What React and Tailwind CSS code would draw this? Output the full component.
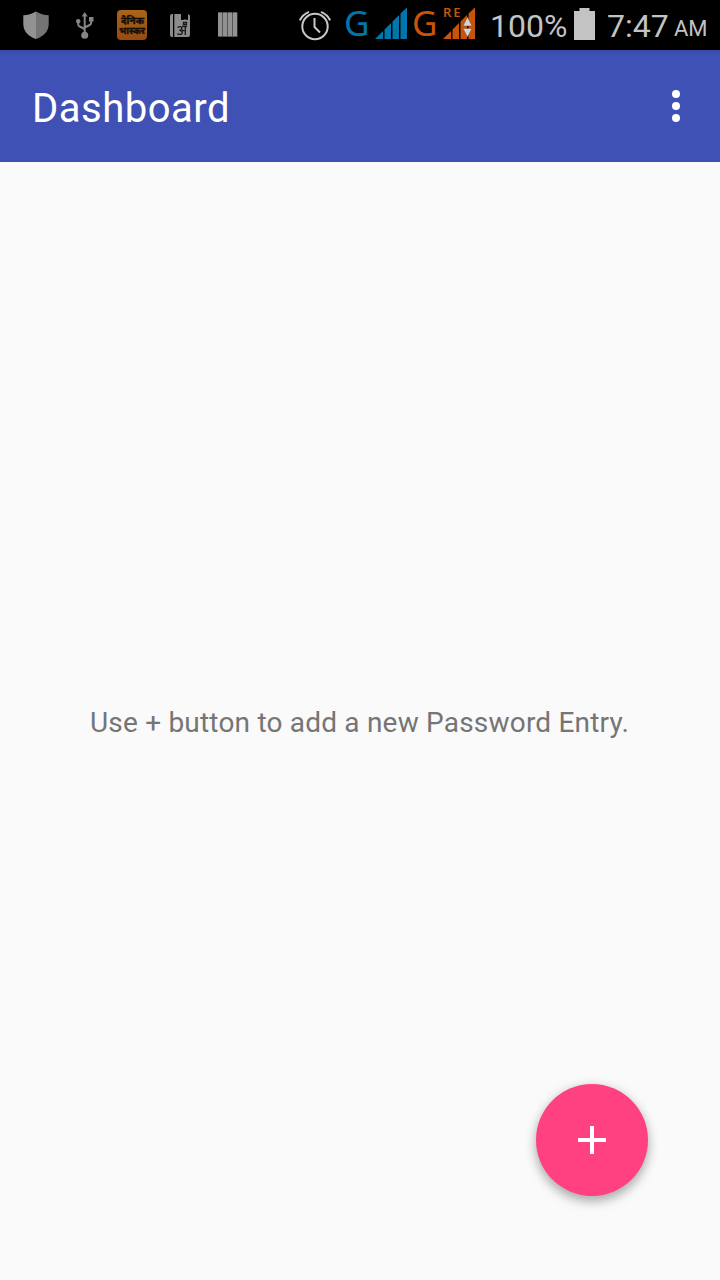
function ShieldIcon() {
  return (
    <svg className="ml-[23px] h-[50px] w-[26px] shrink-0" viewBox="0 0 26 50">
      <path d="M13 11.5C9 14 5 15 .3 15.300V24c0 7 5 12.500 12.700 15Z" fill="#929292" />
      <path d="M13 11.500c4 2.500 8 3.500 12.700 3.800V24c0 7-5 12.500-12.700 15Z" fill="#747474" />
    </svg>
  );
}

function UsbIcon() {
  return (
    <svg className="ml-[26px] h-[50px] w-[20px] shrink-0" viewBox="0 0 20 50">
      <g fill="#858585">
        <path d="M9.700 12l3 4.500H6.700z" />
        <circle cx="9.700" cy="35.200" r="3.500" />
        <circle cx="3.200" cy="21.300" r="2.200" />
        <rect x="14" y="17" width="4.500" height="4.500" />
      </g>
      <path d="M9.700 15v18M3.200 21v3.500q0 1.500 1.500 2l5 2.500M16.200 20v2.800q0 1.500-1.500 2.200l-5 2.500" fill="none" stroke="#858585" strokeWidth="2" />
    </svg>
  );
}

function NewsIcon() {
  return (
    <svg className="ml-[22px] h-[50px] w-[30px] shrink-0" viewBox="0 0 30 50">
      <defs>
        <linearGradient id="news" x1="0" y1="0" x2="0" y2="1">
          <stop offset="0" stopColor="#a96519" />
          <stop offset="1" stopColor="#984a12" />
        </linearGradient>
      </defs>
      <rect y="10" width="30" height="30" rx="4" fill="url(#news)" />
      <g fill="#160f08" stroke="#160f08" strokeWidth=".4" fontFamily="Noto Sans, sans-serif" fontWeight="700">
        <text x="4" y="24" fontSize="9.500" textLength="23" lengthAdjust="spacingAndGlyphs">दैनिक</text>
        <text x="2" y="33.500" fontSize="9.500" textLength="26" lengthAdjust="spacingAndGlyphs">भास्कर</text>
      </g>
    </svg>
  );
}

function DictionaryIcon() {
  return (
    <svg className="ml-[23px] h-[50px] w-[20px] shrink-0" viewBox="0 0 20 50">
      <path d="M2 14h1v23H2q-2 0-2-2V16q0-2 2-2ZM4.300 14H11v6h7v-6l2 1.500V35q0 2-2 2H4.300Z" fill="#8c8c8c" />
      <path d="M13.500 19.500v1.500h3v-1.500z" fill="#8c8c8c" />
      <path d="M7.500 27.500q4-2 4.300.8 0 2-2.500 2 3 0 3 2.300 0 3-5 1.200M12 30.500h2.500M12 26.500h5M15.300 26.500v8.500M13.500 24.500v-2h3v2z" fill="none" stroke="#181818" strokeWidth="1.300" />
    </svg>
  );
}

function BarsIcon() {
  return (
    <svg className="ml-[28px] h-[50px] w-[20px] shrink-0" viewBox="0 0 20 50">
      <path d="M0 12.500h19.500v24.500H0z" fill="#555" />
      <path d="M0 12.500h4v23.500H0zM5 12.500h4v23.500H5zM10 12.500h4v23.500h-4zM15 12.500h4v23.500h-4z" fill="#929292" />
    </svg>
  );
}

function AlarmIcon() {
  return (
    <svg className="ml-[61px] h-[50px] w-[32px] shrink-0" viewBox="0 0 32 50" fill="none" stroke="#c8c8c8" strokeWidth="2">
      <circle cx="16" cy="26.500" r="12.700" />
      <path d="M15.500 18v9l5.500 5.500M.9 20.300Q3.500 14.500 10 11.800M31.100 20.300Q28.500 14.500 22 11.800" />
    </svg>
  );
}

function SignalBars({ className }) {
  return (
    <svg className={className} viewBox="0 0 32 50">
      <path d="M0 39l8-8v8zM9.500 29.500 16 23V39H9.500zM17.500 21.500l6.500-6.500V39h-6.500zM25.500 13.500l6.500-6v31.500h-6.500z" fill="currentColor" />
    </svg>
  );
}

function StatusBar() {
  return (
    <header className="flex h-[50px] w-full items-center overflow-hidden bg-black text-[#c3c3c3]">
      <ShieldIcon />
      <UsbIcon />
      <NewsIcon />
      <DictionaryIcon />
      <BarsIcon />
      <AlarmIcon />
      <span className="mt-[-5px] ml-[13px] w-[26px] shrink-0 font-['Noto_Sans',sans-serif] text-[35px] leading-[50px] text-[#0077ac]">G</span>
      <SignalBars className="ml-[5px] h-[50px] w-[32px] shrink-0 text-[#0077ac]" />
      <span className="mt-[-5px] ml-[5px] w-[26px] shrink-0 font-['Noto_Sans',sans-serif] text-[35px] leading-[50px] text-[#c8540c]">G</span>
      <div className="relative ml-[5px] h-[50px] w-[32px] shrink-0 text-[#c8540c]">
        <SignalBars className="h-[50px] w-[32px]" />
        <span className="absolute top-[4px] left-0 font-['Noto_Sans',sans-serif] text-[13px] leading-4 font-semibold tracking-[2px]">RE</span>
        <svg className="absolute top-[16px] left-[19px] h-[22px] w-[11px]" viewBox="0 0 11 22">
          <path d="M5.500 1l4.500 9H1zM1 12.500h9L5.500 21z" fill="#d5d5d5" stroke="#854a25" strokeWidth=".5" />
        </svg>
      </div>
      <span className="mt-[1px] ml-[15px] w-[78px] shrink-0 text-[32px] leading-[50px]">100%</span>
      <svg className="ml-[6px] h-[50px] w-[21px] shrink-0" viewBox="0 0 21 50">
        <path d="M5.500 8h10v3H21v29H0V11h5.500z" fill="#c3c3c3" />
      </svg>
      <span className="mt-[1px] ml-[12px] w-[63px] shrink-0 text-[32px] leading-[50px]">7:47</span>
      <span className="mt-[8px] ml-[4px] shrink-0 text-[22px] leading-[50px]">AM</span>
    </header>
  );
}

export default function App() {
  return (
    <div className="flex h-[1280px] w-[720px] flex-col overflow-hidden bg-[#fafafa] font-[Roboto,sans-serif]">
      <StatusBar />
      <div className="flex h-[112px] shrink-0 items-center justify-between bg-[#3f51b5] bg-linear-to-b from-[#3949a5] to-[#3f51b5] to-[5px] pr-[40px] pl-[32px]">
        <h1 className="mt-[5px] text-[40px] leading-[48px] tracking-[0.5px] text-white">Dashboard</h1>
        <button aria-label="More options" className="flex flex-col gap-1">
          <span className="size-2 rounded-full bg-white" />
          <span className="size-2 rounded-full bg-white" />
          <span className="size-2 rounded-full bg-white" />
        </button>
      </div>
      <main className="flex flex-1 flex-col">
        <p className="mt-[544px] ml-[90px] text-[28px] leading-[33px] tracking-[0.2px] whitespace-nowrap text-[#757575]">Use + button to add a new Password Entry.</p>
        <button aria-label="Add entry" className="mt-auto mr-[72px] mb-[84px] flex size-[112px] items-center justify-center self-end rounded-full bg-[#ff4081] shadow-[0_6px_11px_rgba(0,0,0,0.25),0_1px_12px_rgba(0,0,0,0.12)]">
          <svg className="size-[28px]" viewBox="0 0 28 28">
            <path d="M14 0v28M0 14h28" stroke="#fff" strokeWidth="4" />
          </svg>
        </button>
      </main>
    </div>
  );
}
